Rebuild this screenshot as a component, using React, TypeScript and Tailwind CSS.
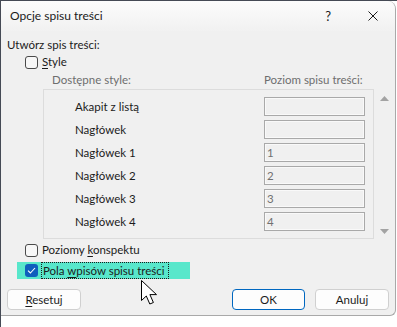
import React from "react";

const font = "font-['Lato','Segoe_UI','Noto_Sans',sans-serif]";

function Check({ checked = false }: { checked?: boolean }) {
	if (checked) {
		return (
			<span className="w-[13px] h-[13px] rounded-[3px] bg-[#0f5fbd] flex items-center justify-center shrink-0">
				<svg width="9" height="7" viewBox="0 0 9 7">
					<path d="M1 3.6 L3.4 6 L8 1" fill="none" stroke="#fff" strokeWidth="1.1" />
				</svg>
			</span>
		);
	}
	return <span className="w-[13px] h-[13px] rounded-[3px] border border-[#4a4a4a] bg-[#f7f7f7] shrink-0" />;
}

const rows: { name: string; level: string }[] = [
	{ name: "Akapit z listą", level: "" },
	{ name: "Nagłówek", level: "" },
	{ name: "Nagłówek 1", level: "1" },
	{ name: "Nagłówek 2", level: "2" },
	{ name: "Nagłówek 3", level: "3" },
	{ name: "Nagłówek 4", level: "4" },
];

export default function App() {
	return (
		<div className={`relative w-[397px] h-[327px] bg-white overflow-hidden ${font} text-[11.5px] text-[#1b1b1b]`}>
			<div className="h-px bg-[#454a55]" />
			<div className="flex">
				<div className="w-px bg-[#454a55] h-[326px]" />
				<div className="w-[395px] h-[315px] flex flex-col bg-[#f0f0f0] border-r border-b border-[#a9a9a9] rounded-tr-[8px] rounded-br-[6px]">
					{/* title bar */}
					<div className="h-[30px] flex items-center pl-[9px] pr-[17px] bg-gradient-to-b from-[#fcfcfc] to-[#f1f1f1] rounded-tr-[8px]">
						<span className="text-[12px] leading-none">Opcje spisu treści</span>
						<span className="ml-auto text-[13px] leading-none mr-[37px]">?</span>
						<svg width="10" height="10" viewBox="0 0 10 10">
							<path d="M0.5 0.5 L9.5 9.5 M9.5 0.5 L0.5 9.5" stroke="#1b1b1b" strokeWidth="1" />
						</svg>
					</div>

					<div className="flex flex-col pl-[6px]">
						<div className="h-[16px] mt-[6px] flex items-center">Utwórz spis treści:</div>
						<div className="h-[16px] mt-px flex items-center gap-[4px] pl-[18px]">
							<Check />
							<span>
								<span className="underline underline-offset-2">S</span>tyle
							</span>
						</div>
						<div className="h-[16px] mt-[2px] flex items-center pl-[45px] text-[#6e6e6e]">
							<span className="w-[212px]">Dostępne style:</span>
							<span>Poziom spisu treści:</span>
						</div>

						<div className="flex mt-px pl-[36px]">
							<div className="w-[331px] h-[150px] border border-[#dcdcdc] pt-[7px] pl-[31px] flex flex-col gap-[4px]">
								{rows.map((r) => (
									<div key={r.name} className="h-[19px] flex items-center">
										<span className="w-[189px]">{r.name}</span>
										<span className="w-[101px] h-[19px] border border-[#a9a9a9] bg-[#f0f0f0] flex items-center pl-[2px] text-[#707070] shadow-[inset_0_0_0_1px_#f9f9f9]">
											{r.level}
										</span>
									</div>
								))}
							</div>
							<div className="w-[18px] flex flex-col items-center justify-between pt-[7px] pb-[5px] pl-[2px]">
								<svg width="9" height="5" viewBox="0 0 9 5">
									<path d="M4.5 0 L9 5 L0 5 Z" fill="#a3a3a3" />
								</svg>
								<svg width="9" height="5" viewBox="0 0 9 5">
									<path d="M0 0 L9 0 L4.5 5 Z" fill="#a3a3a3" />
								</svg>
							</div>
						</div>

						<div className="h-[16px] mt-[3px] flex items-center gap-[4px] pl-[18px]">
							<Check />
							<span>
								Poziomy <span className="underline underline-offset-2">k</span>onspektu
							</span>
						</div>
						<div className="h-[17px] mt-[4px] ml-[10px] w-[173px] bg-[#58e7cb] flex items-center gap-[3px] pl-[8px]">
							<Check checked />
							<span className="h-[17px] w-[128px] pl-px border border-dotted border-[#1b1b1b] flex items-center whitespace-nowrap">
								<span>
									Pola <span className="underline underline-offset-2">w</span>pisów spisu treści
								</span>
							</span>
						</div>

						<div className="flex mt-[10px] h-[21px] pr-[6px]">
							<button
								type="button"
								className="w-[74px] h-[21px] rounded-[4px] border border-[#d0d0d0] bg-[#fdfdfd] flex items-center justify-center"
							>
								<span>
									<span className="underline underline-offset-2">R</span>esetuj
								</span>
							</button>
							<button
								type="button"
								className="ml-auto w-[73px] h-[21px] rounded-[4px] border border-[#0067c0] bg-[#fdfdfd] flex items-center justify-center"
							>
								OK
							</button>
							<button
								type="button"
								className="ml-[10px] w-[74px] h-[21px] rounded-[4px] border border-[#d0d0d0] bg-[#fdfdfd] flex items-center justify-center"
							>
								Anuluj
							</button>
						</div>
					</div>
				</div>
			</div>

			{/* mouse pointer */}
			<svg className="absolute left-[140px] top-[279px]" width="19" height="27" viewBox="0 0 19 27">
				<path
					d="M1.5 1.5 V21.5 L6.3 17 L9.8 25 L13.4 23.5 L9.9 15.6 H16.5 Z"
					fill="#fff"
					stroke="#000"
					strokeWidth="1"
					strokeLinejoin="round"
				/>
			</svg>
		</div>
	);
}
